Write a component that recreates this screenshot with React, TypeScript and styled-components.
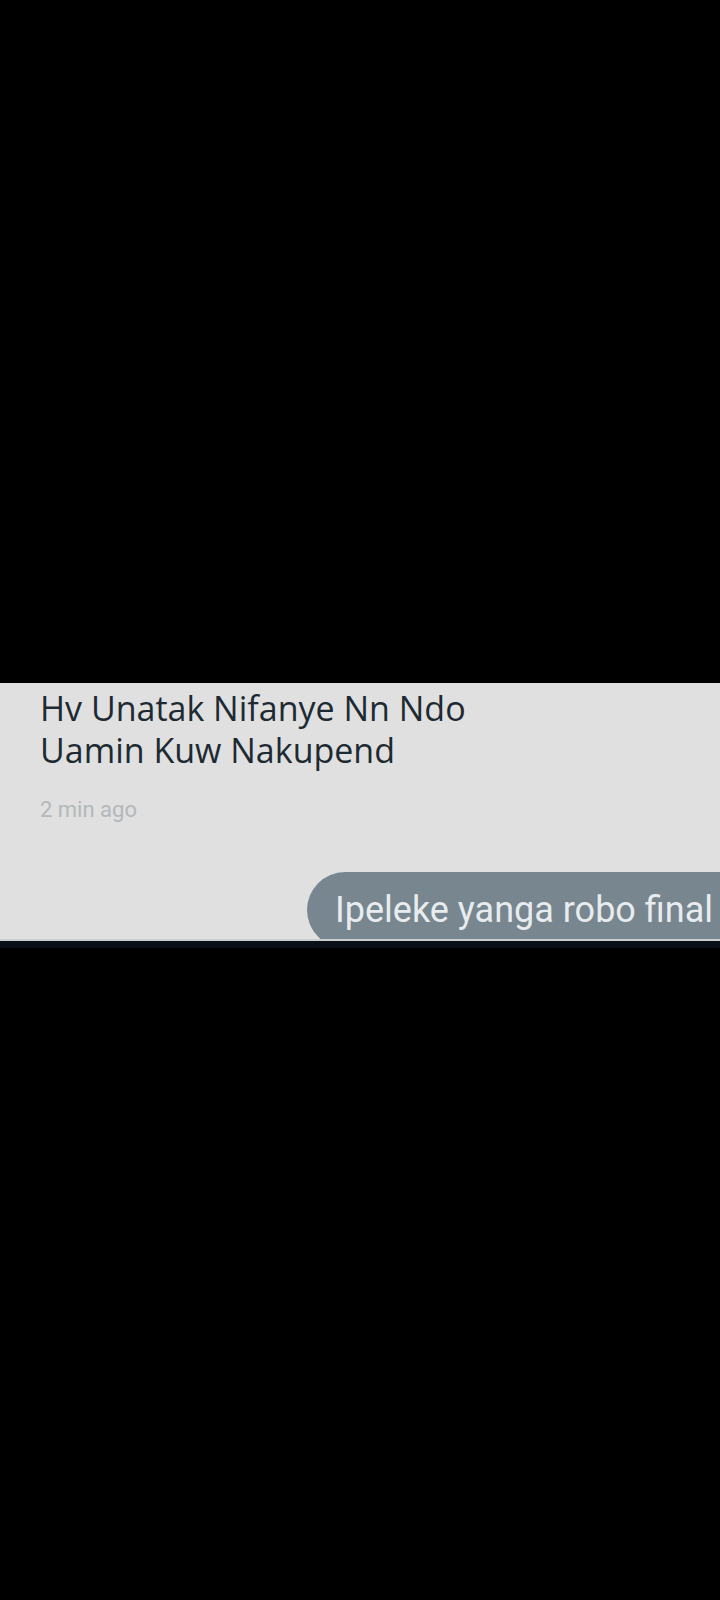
import styled, { createGlobalStyle } from "styled-components";

const Global = createGlobalStyle`
  html, body {
    margin: 0;
    padding: 0;
    background: #000;
  }
`;

const Page = styled.div`
  width: 720px;
  height: 1600px;
  background: #000;
  display: flex;
  flex-direction: column;
  padding-top: 683px;
  box-sizing: border-box;
`;

const Strip = styled.div`
  height: 258px;
  background: #e0e0e0;
  display: flex;
  flex-direction: column;
  overflow: hidden;
  border-bottom: 2px solid #c9cfcf;
  box-sizing: border-box;
`;

const Incoming = styled.div`
  padding: 4px 0 0 40px;
  font-family: "Open Sans", "Noto Sans", sans-serif;
  font-size: 34px;
  line-height: 42px;
  color: #1d2a32;
`;

const Time = styled.div`
  margin-top: 26px;
  padding-left: 40px;
  font-family: Roboto, sans-serif;
  font-size: 22px;
  color: #b3b8bb;
`;

const OutRow = styled.div`
  margin-top: auto;
  margin-bottom: -9px;
  display: flex;
  justify-content: flex-end;
`;

const Bubble = styled.div`
  height: 76px;
  padding: 0 7px 0 28px;
  background: #77868f;
  border-radius: 38px 0 0 38px;
  font-family: Roboto, sans-serif;
  font-size: 36px;
  line-height: 76px;
  color: #e8ecee;
  white-space: nowrap;
`;

const Edge = styled.div`
  height: 7px;
  background: #0a0f18;
`;

export default function App() {
  return (
    <>
      <Global />
      <Page>
        <Strip>
          <Incoming>
            Hv Unatak Nifanye Nn Ndo
            <br />
            Uamin Kuw Nakupend
          </Incoming>
          <Time>2 min ago</Time>
          <OutRow>
            <Bubble>Ipeleke yanga robo final</Bubble>
          </OutRow>
        </Strip>
        <Edge />
      </Page>
    </>
  );
}
